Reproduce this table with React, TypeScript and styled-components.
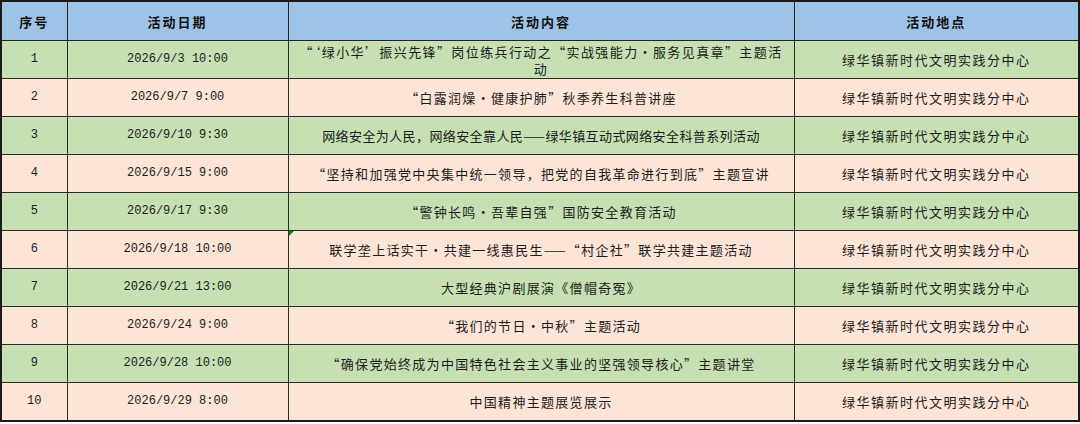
import React from "react";
import styled, { createGlobalStyle } from "styled-components";

const Global = createGlobalStyle`
  html, body { margin: 0; padding: 0; background: #ffffff; }
  body { font-family: "Noto Sans CJK SC", sans-serif; }
`;

const Table = styled.table`
  border-collapse: collapse;
  table-layout: fixed;
  width: 1078px;
  border: 2px solid #1a1a1a;
`;

const Col = styled.col<{ $w: number }>`
  width: ${(p) => p.$w}px;
`;

const HeadCell = styled.th`
  background: #9dc3e6;
  height: 38px;
  padding: 0;
  border: 1px solid #222;
  font-family: "Noto Sans CJK SC", sans-serif;
  font-weight: 700;
  font-size: 13px;
  letter-spacing: 2px;
  color: #111;
  text-align: center;
  vertical-align: middle;
`;

const Row = styled.tr<{ $alt: boolean }>`
  background: ${(p) => (p.$alt ? "#fce4d6" : "#c6e0b4")};
`;

const Cell = styled.td<{ $mono?: boolean; $ls?: number }>`
  position: relative;
  height: 37px;
  padding: 0 4px;
  border: 1px solid #2b2b2b;
  font-family: ${(p) =>
    p.$mono
      ? '"Liberation Mono", "Noto Sans CJK SC", monospace'
      : '"Noto Sans CJK SC", sans-serif'};
  font-size: ${(p) => (p.$mono ? "12px" : "13px")};
  letter-spacing: ${(p) => p.$ls ?? 1.3}px;
  line-height: 17px;
  color: #1c1c1c;
  text-align: center;
  vertical-align: middle;
`;

const Marker = styled.span`
  position: absolute;
  left: 0;
  top: 0;
  width: 0;
  height: 0;
  border-top: 5px solid #1e7b1e;
  border-right: 5px solid transparent;
`;

type Item = { date: string; content: string; ls?: number; mark?: boolean };

const items: Item[] = [
  { date: "2026/9/3 10:00", content: "“‘绿小华’振兴先锋”岗位练兵行动之“实战强能力·服务见真章”主题活动", ls: 1.4 },
  { date: "2026/9/7 9:00", content: "“白露润燥·健康护肺”秋季养生科普讲座" },
  { date: "2026/9/10 9:30", content: "网络安全为人民，网络安全靠人民——绿华镇互动式网络安全科普系列活动", ls: 0.4 },
  { date: "2026/9/15 9:00", content: "“坚持和加强党中央集中统一领导，把党的自我革命进行到底”主题宣讲" },
  { date: "2026/9/17 9:30", content: "“警钟长鸣·吾辈自强”国防安全教育活动" },
  { date: "2026/9/18 10:00", content: "联学垄上话实干·共建一线惠民生——“村企社”联学共建主题活动", mark: true },
  { date: "2026/9/21 13:00", content: "大型经典沪剧展演《僧帽奇冤》" },
  { date: "2026/9/24 9:00", content: "“我们的节日·中秋”主题活动" },
  { date: "2026/9/28 10:00", content: "“确保党始终成为中国特色社会主义事业的坚强领导核心”主题讲堂" },
  { date: "2026/9/29 8:00", content: "中国精神主题展览展示" },
];

export default function App() {
  return (
    <>
      <Global />
      <Table>
        <colgroup>
          <Col $w={66} />
          <Col $w={221} />
          <Col $w={506} />
          <Col $w={285} />
        </colgroup>
        <thead>
          <tr>
            <HeadCell>序号</HeadCell>
            <HeadCell>活动日期</HeadCell>
            <HeadCell>活动内容</HeadCell>
            <HeadCell>活动地点</HeadCell>
          </tr>
        </thead>
        <tbody>
          {items.map((it, i) => (
            <Row key={i} $alt={i % 2 === 1}>
              <Cell $mono $ls={0}>{i + 1}</Cell>
              <Cell $mono $ls={0}>{it.date}</Cell>
              <Cell $ls={it.ls}>
                {it.mark && <Marker />}
                {it.content}
              </Cell>
              <Cell $ls={1.5}>绿华镇新时代文明实践分中心</Cell>
            </Row>
          ))}
        </tbody>
      </Table>
    </>
  );
}
